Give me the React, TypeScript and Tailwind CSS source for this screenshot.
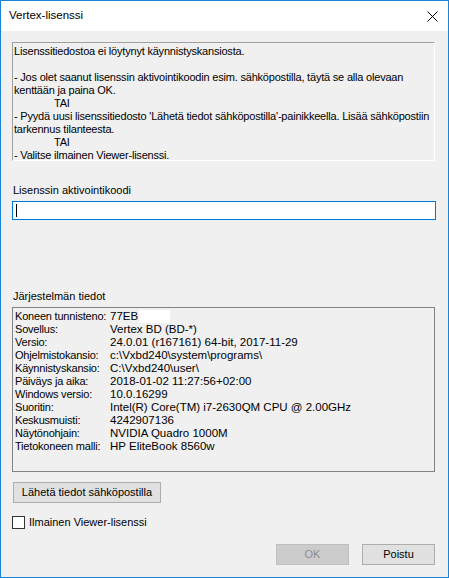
import React from 'react';

const info: [string, string][] = [
  ['Koneen tunnisteno:', '77EB'],
  ['Sovellus:', 'Vertex BD (BD-*)'],
  ['Versio:', '24.0.01 (r167161) 64-bit, 2017-11-29'],
  ['Ohjelmistokansio:', 'c:\\Vxbd240\\system\\programs\\'],
  ['Käynnistyskansio:', 'C:\\Vxbd240\\user\\'],
  ['Päiväys ja aika:', '2018-01-02 11:27:56+02:00'],
  ['Windows versio:', '10.0.16299'],
  ['Suoritin:', 'Intel(R) Core(TM) i7-2630QM CPU @ 2.00GHz'],
  ['Keskusmuisti:', '4242907136'],
  ['Näytönohjain:', 'NVIDIA Quadro 1000M'],
  ['Tietokoneen malli:', 'HP EliteBook 8560w'],
];

export default function App() {
  return (
    <div className="w-[449px] h-[578px] border border-[#1883d7] bg-[#f0f0f0] flex flex-col text-black font-['Liberation_Sans',Arial,sans-serif]">
      <div className="h-[30px] shrink-0 bg-white flex items-center justify-between pl-[8px] pr-[10px]">
        <span className="text-[11.5px]">Vertex-lisenssi</span>
        <svg width="11" height="11" viewBox="0 0 11 11">
          <path d="M0.5 0.5 L10.5 10.5 M10.5 0.5 L0.5 10.5" stroke="#000" strokeWidth="1" fill="none" />
        </svg>
      </div>

      <div className="flex-1 flex flex-col pl-[11px] pr-[13px] text-[11px] leading-[13px]">
        <div className="mt-[11px] h-[119px] border-t border-l border-[#a0a0a0] border-r-white border-b-white border-r border-b pt-[2px] pl-px tracking-[-0.2px] whitespace-nowrap">
          <div>Lisenssitiedostoa ei löytynyt käynnistyskansiosta.</div>
          <div>&nbsp;</div>
          <div>- Jos olet saanut lisenssin aktivointikoodin esim. sähköpostilla, täytä se alla olevaan</div>
          <div>kenttään ja paina OK.</div>
          <div className="pl-[40px]">TAI</div>
          <div>- Pyydä uusi lisenssitiedosto 'Lähetä tiedot sähköpostilla'-painikkeella. Lisää sähköpostiin</div>
          <div>tarkennus tilanteesta.</div>
          <div className="pl-[40px]">TAI</div>
          <div>- Valitse ilmainen Viewer-lisenssi.</div>
        </div>

        <div className="mt-[23px] h-[13px] pl-px">Lisenssin aktivointikoodi</div>
        <div className="mt-[4px] h-[19px] mr-[-1px] border border-[#0078d7] bg-white flex items-center pl-[3px]">
          <div className="w-px h-[13px] bg-black" />
        </div>

        <div className="mt-[70px] h-[13px] pl-px">Järjestelmän tiedot</div>
        <div className="mt-[4px] h-[165px] border border-[#828282] pt-[2px] pl-[2px] text-[11.5px]">
          {info.map(([k, v], i) => (
            <div key={k} className="flex h-[13px] leading-[13px] whitespace-nowrap">
              <span className="w-[95px] shrink-0 text-[11px] tracking-[-0.2px]">{k}</span>
              <span className="flex items-center">
                {v}
                {i === 0 && <span className="inline-block w-[31px] h-[13px] bg-white ml-[1px]" />}
              </span>
            </div>
          ))}
        </div>

        <button className="mt-[10px] self-start ml-px w-[148px] h-[21px] bg-[#e1e1e1] border border-[#adadad] text-[11px] leading-none">
          Lähetä tiedot sähköpostilla
        </button>

        <label className="mt-[13px] flex items-center gap-[4px] h-[13px]">
          <span className="w-[13px] h-[13px] border border-[#333333] bg-white" />
          <span>Ilmainen Viewer-lisenssi</span>
        </label>

        <div className="mt-[15px] flex justify-end gap-[13px]">
          <button className="w-[73px] h-[21px] bg-[#cccccc] border border-[#bfbfbf] text-[#8d8d8d] text-[11px] leading-none">OK</button>
          <button className="w-[73px] h-[21px] bg-[#e1e1e1] border border-[#adadad] text-[11px] leading-none">Poistu</button>
        </div>
      </div>
    </div>
  );
}
